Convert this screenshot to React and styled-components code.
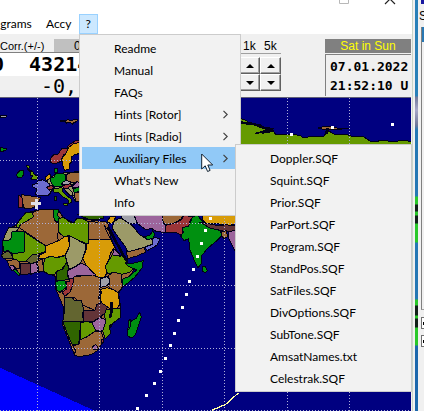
import React from "react";
import styled, { createGlobalStyle } from "styled-components";

const GlobalStyle = createGlobalStyle`
  *, *::before, *::after { box-sizing: border-box; }
  body { margin: 0; background: #f0f0f0; overflow: hidden; }
  button, input { font: inherit; color: inherit; }
`;

const uiFont = `Lato, "Open Sans", sans-serif`;
const labelFont = `"Liberation Sans", Arial, sans-serif`;
const monoFont = `"DejaVu Sans Mono", "Liberation Mono", monospace`;

const Desktop = styled.div`
  display: flex;
  height: 100vh;
  overflow: hidden;
  font-family: ${uiFont};
  font-size: 12px;
  color: #000;
`;

const AppWindow = styled.main`
  position: relative;
  flex: 1;
  min-width: 0;
  display: flex;
  flex-direction: column;
  background: #f0f0f0;
  border-right: 1px solid #c9d6c9;
`;

const TitleBar = styled.header`
  display: flex;
  justify-content: flex-end;
  align-items: flex-start;
  gap: 34px;
  height: 14px;
  padding-right: 16px;
  background: #fff;
`;

const CaptionButton = styled.button`
  display: flex;
  padding: 0;
  border: 0;
  background: none;
`;

const MenuBar = styled.nav`
  display: flex;
  align-items: stretch;
  height: 20px;
  background: #fff;
`;

const MenuBarItem = styled.button`
  padding: 0 6px;
  padding-left: ${(p) => (p.$cut ? "0" : "6px")};
  min-width: ${(p) => (p.$open ? "19px" : "39px")};
  border: 1px solid ${(p) => (p.$open ? "#99d1ff" : "transparent")};
  border-left-width: ${(p) => (p.$cut ? "0" : "1px")};
  background: ${(p) => (p.$open ? "#cce8ff" : "transparent")};
  line-height: 18px;
`;

const Instruments = styled.section`
  display: flex;
  justify-content: space-between;
  height: 63px;
  padding-top: 5px;
  font-family: ${labelFont};
`;

const Frequency = styled.div`
  flex: 1;
  display: grid;
  grid-template-rows: 14px 23px 21px;
`;

const CaptionRow = styled.div`
  display: flex;
  justify-content: space-between;
  width: 100px;
  border-bottom: 1px solid #808080;
  line-height: 14px;
`;

const Caption = styled.span`
  width: 54px;
  font-size: 11px;
  line-height: 14px;
`;

const Offset = styled.span`
  flex: 1;
  padding-left: 20px;
  background: #c0c0c0;
`;

const Reading = styled.output`
  width: 100px;
  padding-left: ${(p) => (p.$small ? "41px" : "0")};
  background: ${(p) => (p.$small ? "#f0f0f0" : "#fff")};
  font-family: ${monoFont};
  font-size: 20px;
  font-weight: ${(p) => (p.$small ? 400 : 700)};
  line-height: ${(p) => (p.$small ? "21px" : "23px")};
  white-space: pre;
`;

const Digits = styled.span`
  margin-left: ${(p) => (p.$first ? "-8px" : "25px")};
`;

const Steppers = styled.div`
  display: flex;
  width: 46px;
  margin-right: 40px;
`;

const Stepper = styled.fieldset`
  width: 21px;
  margin: 0;
  padding: 0;
  border: 0;
  display: flex;
  flex-direction: column;
  min-width: 0;
`;

const StepLabel = styled.span`
  height: 15px;
  margin-bottom: 3px;
  padding-left: 4px;
  border-bottom: 1px solid #a0a0a0;
  line-height: 14px;
`;

const StepButton = styled.button`
  display: grid;
  place-items: center;
  height: 17px;
  padding: 0;
  border: 1px solid;
  border-color: #fff #606060 #606060 #fff;
  box-shadow: inset -1px -1px #a0a0a0;
  background: #f0f0f0;
`;

const Clock = styled.div`
  width: 86px;
  margin-right: 1px;
`;

const ClockHeading = styled.h2`
  margin: 0;
  height: 14px;
  background: #808080;
  color: #ff0;
  font-size: 12px;
  font-weight: 400;
  line-height: 14px;
  text-align: center;
`;

const ClockFace = styled.div`
  height: 42px;
  margin-top: 1px;
  padding-left: 4px;
  border-top: 1px solid #808080;
  border-left: 1px solid #808080;
  font: 700 13px/19px ${monoFont};
  padding-top: 2px;
  white-space: nowrap;
`;

const TimeLine = styled.time`
  display: block;
`;

const MapArea = styled.section`
  flex: 1;
  min-height: 0;
  margin-right: 1px;
  background: #000080;
  border-top: 1px solid #606078;

  svg {
    display: block;
    width: 100%;
    height: 100%;
    shape-rendering: crispEdges;
  }
`;

const Popup = styled.ul`
  position: absolute;
  top: ${(p) => (p.$sub ? "144px" : "34px")};
  left: ${(p) => (p.$sub ? "235px" : "79px")};
  width: ${(p) => (p.$sub ? "177px" : "162px")};
  margin: 0;
  padding: 2px;
  border: 1px solid #ccc;
  background: #f2f2f2;
  list-style: none;
`;

const PopupItem = styled.button`
  display: flex;
  align-items: center;
  justify-content: space-between;
  width: 100%;
  height: 22px;
  padding: 0 10px 0 32px;
  border: 0;
  background: ${(p) => (p.$active ? "#91c9f7" : "transparent")};
  text-align: left;
  white-space: nowrap;
`;

const Cursor = styled.svg`
  position: absolute;
  left: 201px;
  top: 153px;
`;

const DesktopStrip = styled.div`
  width: 3px;
  margin-left: 2px;
  background: linear-gradient(
    #2880b8 0 96px, #707898 97px, #a8a8c8 110px, #707898 125px,
    #2478b4 130px 196px, #28c828 197px 204px, #102018 205px 211px,
    #28c828 212px 215px, #102018 216px 223px, #28c828 224px 242px,
    #2478b4 243px 299px, #28c828 300px 305px, #102018 306px 315px,
    #28c828 316px 318px, #102018 319px 327px, #28c828 328px 345px,
    #1c68ac 346px
  );
`;

const Neighbour = styled.aside`
  width: 6px;
  overflow: hidden;
  padding-left: 1px;
  background: #f0f0f0;
  font-family: ${labelFont};
`;

const NeighbourTitle = styled.div`
  height: 4px;
  margin: 0 0 5px 2px;
  background: #1818a0;
`;

const NeighbourMenu = styled.div`
  height: 18px;
  line-height: 14px;
`;

const NeighbourList = styled.div`
  height: 283px;
  margin: 0 0 7px 2px;
  border-left: 1px solid #808080;
  border-bottom: 1px solid #a0a0a0;
  background: linear-gradient(#2878b4 0 15px, #f0f0f0 15px);
`;

const Tick = styled.input`
  appearance: none;
  display: block;
  width: 12px;
  height: 12px;
  margin: 0 0 6px 2px;
  border: 1px solid #707070;
  background: linear-gradient(#000, #000) 1px 4px / 3px 3px no-repeat #fff;
`;

const green = "#009010";
const lime = "#659a00";
const brown = "#9c6838";
const gold = "#d89c08";
const sand = "#9c9a68";
const olive = "#636530";
const forest = "#306500";
const mauve = "#9c659c";
const maroon = "#633438";
const red = "#9c3538";
const violet = "#6c6cd0";
const grey = "#a0a0a8";

const regions = [
  {
    id: "europe",
    at: "translate(0 285)",
    lands: [
      [sand, "144,256 152,246 172,236 204,232 240,230 240,322 226,318 212,296 196,284 184,278 158,284 146,300 132,303 140,276"],
      [grey, "0,60 20,60 18,66 0,68"],
      [green, "0,158 18,160 18,166 0,171"],
      [brown, "180,76 196,78 204,73 213,78 226,72 234,75 230,80 220,83 218,88 208,81 200,85 196,80 182,80"],
      [red, "150,192 160,180 174,178 186,160 200,160 208,148 226,138 240,136 238,148 212,158 202,174 190,180 185,198 165,207 152,203"],
      [gold, "190,218 185,192 198,175 205,158 220,147 240,142 240,176 225,178 215,186 216,200 208,208 208,222 195,226"],
      [green, "162,222 172,220 172,232 165,234"],
      [lime, "80,210 90,214 86,222 98,230 102,238 115,244 112,252 92,252 98,243 90,240 92,232 82,222"],
      [green, "50,238 58,228 70,226 70,240 66,246 52,249"],
      [gold, "136,246 150,236 150,250 138,256"],
      [green, "152,248 162,246 166,236 176,234 196,238 199,262 185,266 188,273 160,273 153,262"],
      [brown, "200,238 215,232 240,232 240,262 212,264 200,254"],
      [violet, "98,268 112,266 114,258 128,254 140,260 150,268 146,278 152,294 144,300 128,303 106,298 110,282 98,276"],
      [red, "140,276 154,272 164,276 156,284 144,282"],
      [grey, "186,262 200,256 214,262 212,268 192,270"],
      [red, "188,272 210,266 214,272 202,280 190,279"],
      [gold, "212,268 228,266 232,274 216,277"],
      [mauve, "214,276 230,277 240,275 240,262 230,260"],
      [lime, "158,284 168,280 184,278 190,280 186,288 200,302 214,312 216,320 208,326 204,314 188,306 176,292 162,292"],
      [sand, "192,280 206,281 216,290 220,303 208,300 196,288"],
      [green, "218,280 240,278 240,290 222,292"],
      [brown, "222,294 240,292 240,320 228,318 224,306"],
      [forest, "164,304 170,304 169,316 163,316"],
      [lime, "190,324 205,325 202,332 192,330"],
      [brown, "64,299 82,301 100,304 122,308 118,318 108,326 102,338 84,342 70,338 68,316 60,312"],
      [red, "54,302 65,304 67,316 68,336 56,337 54,322"],
    ],
  },
  {
    id: "africa",
    at: "translate(0 585)",
    lands: [
      [brown, "50,90 76,54 112,46 176,46 190,68 222,84 240,70 320,82 334,132 346,160 364,186 388,208 408,214 376,266 356,294 362,340 330,400 300,450 250,480 222,476 188,390 192,340 168,284 166,244 128,230 60,240 8,184 8,138 28,100"],
      [lime, "48,92 58,76 70,62 76,54 98,53 102,66 84,76 62,88 55,100"],
      [brown, "100,66 98,53 112,46 135,42 160,42 164,62 166,78 176,86 173,130 176,136 144,152 134,150 58,98 62,88 84,76"],
      [green, "160,42 174,42 176,50 172,60 180,70 172,82 164,76 160,60"],
      [lime, "176,70 192,68 208,80 222,84 230,70 244,69 266,80 266,144 258,146 206,122 192,126 174,110"],
      [brown, "266,78 290,82 308,78 322,82 328,98 322,104 314,92 316,102 332,132 266,132"],
      [sand, "26,98 56,98 50,108 36,110 32,134 8,138 16,118"],
      [green, "36,110 50,108 74,110 72,172 38,176 24,166 10,170 8,138 32,134"],
      [lime, "74,112 136,152 136,170 112,178 98,180 86,190 80,200 58,200 48,194 36,190 38,176 72,172"],
      [olive, "8,176 24,168 34,176 38,190 10,190 4,182"],
      [brown, "20,196 50,194 60,204 58,220 48,222 42,212 28,214"],
      [mauve, "28,214 40,210 44,222 36,228"],
      [green, "40,226 48,222 60,238 56,242"],
      [maroon, "60,206 80,204 92,208 90,236 62,240"],
      [olive, "78,198 96,180 112,178 120,188 112,200 94,206"],
      [mauve, "92,206 110,202 114,230 92,238"],
      [brown, "112,198 128,192 130,228 116,230"],
      [gold, "138,152 178,136 196,124 206,124 208,154 196,180 174,186 150,186 136,192 116,190 118,180 136,172"],
      [lime, "136,190 150,184 174,188 196,182 200,202 186,222 172,228 162,240 146,238 130,228 130,206"],
      [sand, "208,122 258,148 256,166 248,190 242,204 224,216 202,224 202,204 196,182 208,154"],
      [gold, "266,132 332,132 344,156 332,174 326,196 316,214 322,234 312,246 290,246 272,230 256,206 248,190 258,166 258,146 266,144"],
      [forest, "168,240 172,228 188,222 200,202 206,216 202,236 206,254 184,256 168,256"],
      [mauve, "202,228 222,218 244,204 260,212 276,230 288,240 250,244 232,240 218,250 206,252"],
      [green, "166,260 182,256 196,258 200,276 190,284 180,292 170,284"],
      [red, "198,260 208,260 210,252 222,248 218,270 210,292 194,302 186,292 200,282"],
      [brown, "222,246 250,242 278,240 300,248 304,264 298,280 300,308 312,326 300,348 284,346 248,330 222,306 192,306 210,292 218,270"],
      [grey, "300,252 322,244 330,258 322,272 300,278"],
      [brown, "324,242 342,230 366,236 364,262 372,270 354,294 326,276 330,258"],
      [lime, "326,198 336,180 352,178 368,184 386,206 410,214 388,232 366,238 344,232 322,236 316,214"],
      [mauve, "342,162 350,168 362,184 338,180"],
      [gold, "300,284 322,278 340,284 356,294 358,330 350,342 318,338 302,318"],
    ],
  },
  {
    id: "south",
    at: "translate(0 870)",
    lands: [
      [olive, "192,22 218,24 224,32 244,32 252,60 248,70 250,95 188,95 194,62"],
      [maroon, "250,62 284,62 290,44 304,38 322,50 318,66 300,82 276,96 250,94"],
      [forest, "188,94 240,95 240,120 236,166 216,162 204,136"],
      [lime, "240,98 264,94 278,100 288,122 262,140 240,150"],
      [mauve, "276,98 300,82 318,90 312,118 300,124 286,120"],
      [lime, "318,60 360,54 360,84 328,108 332,130 316,146 308,122 318,92 312,78"],
      [brown, "218,166 236,164 240,150 262,140 284,124 304,124 312,152 292,182 274,194 238,200 224,196 226,180"],
      [mauve, "278,170 286,164 294,170 288,180 280,178"],
      [red, "304,148 312,148 310,158 304,156"],
      [green, "390,88 390,142 382,136 386,92"],
    ],
  },
  {
    id: "asia",
    at: "translate(330 600)",
    lands: [
      [forest, "-100,42 -20,42 -20,56 -60,60"],
      [gold, "0,50 16,48 14,64 2,72 -8,64"],
      [sand, "12,64 30,54 56,68 72,82 88,104 106,114 128,118 126,132 104,142 78,150 54,158 46,140 24,110 6,84"],
      [grey, "32,44 72,44 84,68 60,72 36,56"],
      [mauve, "72,44 158,44 158,64 166,76 166,98 138,94 126,86 106,88 92,78 80,66"],
      [brown, "158,44 218,46 212,58 192,70 166,74 158,62"],
      [red, "166,76 192,70 214,60 222,46 248,50 240,64 236,78 216,84 218,104 206,102 196,96 168,98"],
      [green, "236,78 248,50 262,46 276,62 296,78 332,90 334,108 318,124 292,146 276,166 274,190 264,204 254,184 240,150 236,116 222,122 212,108 220,96 216,84"],
      [gold, "276,44 380,44 380,70 352,78 320,70 290,70 276,60"],
      [maroon, "268,66 290,70 330,78 344,74 380,78 380,92 352,96 334,92 300,84"],
      [brown, "334,96 350,92 352,110 342,116 334,108"],
      [mauve, "354,94 380,92 380,160 366,136 354,112"],
      [brown, "48,156 76,150 102,142 108,156 80,168 54,176"],
      [violet, "104,142 126,134 130,112 150,116 140,136 112,152"],
      [green, "104,110 120,106 128,92 134,104 128,116 110,118"],
      [green, "46,188 62,192 100,182 96,204 74,232 38,262 36,238 56,230 80,210 54,198"],
      [green, "278,200 286,200 292,212 286,218 278,214"],
    ],
  },
  {
    id: "madagascar",
    at: "translate(360 900)",
    lands: [[green, "58,36 64,50 56,74 46,104 36,114 24,108 22,94 30,82 30,66 50,54"]],
  },
  {
    id: "arctic",
    at: "translate(660 0)",
    lands: [
      [lime, "62,356 80,362 90,372 120,374 134,384 156,386 166,402 200,402 240,406 250,414 280,408 312,408 324,392 342,402 380,404 398,410 430,410 452,424 500,422 520,426 548,420 580,426 580,445 56,445"],
      [brown, "294,384 320,378 350,384 390,386 344,388 310,388"],
      [lime, "106,400 140,390 160,386 150,396"],
    ],
  },
];

const meridians = [112, 298, 487, 673, 862, 1048];
const parallels = [482, 670, 856, 1045, 1231];

const track = [
  [631, 655], [616, 691], [604, 730], [592, 769], [580, 808], [568, 844],
  [559, 883], [547, 922], [535, 961], [523, 1000], [511, 1036], [496, 1075],
  [481, 1114], [463, 1150], [439, 1186], [412, 1225], [874, 403], [997, 382],
  [1177, 373],
];

function WorldMap() {
  return (
    <svg viewBox="0 294 1233 939" preserveAspectRatio="xMinYMin slice" role="img" aria-label="World map">
      <polygon points="0,1103 286,1233 0,1233" fill="#0000ff" />
      {regions.map((r) => (
        <g key={r.id} transform={r.at} stroke="#000018" strokeWidth="3" strokeLinejoin="round">
          {r.lands.map(([fill, points]) => (
            <polygon key={points} fill={fill} points={points} />
          ))}
        </g>
      ))}
      <g fill="none" stroke="#000018" strokeWidth="8" strokeLinejoin="round">
        <path d="M324 680l12 22 20 38 10 20 16 24" />
        <path d="M334 905v30l-4 18M302 874l-4 22" />
        <path d="M722 368l40 4 30 12 26 4M784 398l36-8M984 384l-6 18" />
      </g>
      <g stroke="#b0b0d8" strokeWidth="3" strokeDasharray="3 6">
        {meridians.map((x) => <line key={x} x1={x} x2={x} y1="294" y2="1233" />)}
        {parallels.map((y) => <line key={y} x1="0" x2="1233" y1={y} y2={y} />)}
      </g>
      <path d="M635 1231l42-18 38-34" fill="none" stroke="#ffffa0" strokeWidth="4" />
      <path d="M104 597h9v10h11v9h-11v11h-9v-11h-11v-9h11z" fill="#e0e0e8" />
      {track.map(([x, y]) => (
        <rect key={`${x}-${y}`} x={x - 4} y={y - 4} width="9" height="9" fill="#fff" />
      ))}
    </svg>
  );
}

function Chevron() {
  return (
    <svg width="5" height="9" viewBox="0 0 5 9" fill="none" stroke="#404040" strokeWidth="1.2" aria-hidden="true">
      <path d="M.5 .8L4.2 4.5.5 8.2" />
    </svg>
  );
}

function Arrow({ down }) {
  return (
    <svg width="8" height="4" viewBox="0 0 8 4" aria-hidden="true">
      <path d={down ? "M0 0h8L4 4z" : "M0 4h8L4 0z"} />
    </svg>
  );
}

function StepperControl({ label }) {
  return (
    <Stepper aria-label={label}>
      <StepLabel>{label}</StepLabel>
      <StepButton aria-label={`${label} up`}><Arrow /></StepButton>
      <StepButton aria-label={`${label} down`}><Arrow down /></StepButton>
    </Stepper>
  );
}

const helpMenu = [
  { label: "Readme" },
  { label: "Manual" },
  { label: "FAQs" },
  { label: "Hints [Rotor]", more: true },
  { label: "Hints [Radio]", more: true },
  { label: "Auxiliary Files", more: true, active: true },
  { label: "What's New" },
  { label: "Info" },
];

const auxiliaryFiles = [
  "Doppler.SQF", "Squint.SQF", "Prior.SQF", "ParPort.SQF", "Program.SQF", "StandPos.SQF",
  "SatFiles.SQF", "DivOptions.SQF", "SubTone.SQF", "AmsatNames.txt", "Celestrak.SQF",
].map((label) => ({ label }));

function PopupMenu({ items, sub }) {
  return (
    <Popup $sub={sub} role="menu">
      {items.map((item) => (
        <li key={item.label} role="none">
          <PopupItem role="menuitem" $active={item.active}>
            {item.label}
            {item.more && <Chevron />}
          </PopupItem>
        </li>
      ))}
    </Popup>
  );
}

export default function App() {
  return (
    <Desktop>
      <GlobalStyle />
      <AppWindow>
        <TitleBar>
          <CaptionButton aria-label="Maximize">
            <svg width="11" height="5" viewBox="0 0 11 5" fill="none" stroke="#b8b8b8">
              <path d="M.5 0v3.5h9V0" />
            </svg>
          </CaptionButton>
          <CaptionButton aria-label="Close">
            <svg width="12" height="5" viewBox="0 0 12 5" fill="none" stroke="#222" strokeWidth="1.2">
              <path d="M1 4l5-5 5 5" />
            </svg>
          </CaptionButton>
        </TitleBar>
        <MenuBar>
          <MenuBarItem $cut>grams</MenuBarItem>
          <MenuBarItem>Accy</MenuBarItem>
          <MenuBarItem $open>?</MenuBarItem>
        </MenuBar>
        <Instruments>
          <Frequency>
            <CaptionRow>
              <Caption>Corr.(+/-)</Caption>
              <Offset>0</Offset>
            </CaptionRow>
            <Reading>
              <Digits $first>0</Digits>
              <Digits>43214</Digits>
            </Reading>
            <Reading $small>-0,</Reading>
          </Frequency>
          <Steppers>
            <StepperControl label="1k" />
            <StepperControl label="5k" />
          </Steppers>
          <Clock>
            <ClockHeading>Sat in Sun</ClockHeading>
            <ClockFace>
              <TimeLine>07.01.2022</TimeLine>
              <TimeLine>21:52:10 U</TimeLine>
            </ClockFace>
          </Clock>
        </Instruments>
        <MapArea>
          <WorldMap />
        </MapArea>
        <PopupMenu items={helpMenu} />
        <PopupMenu items={auxiliaryFiles} sub />
        <Cursor width="13" height="20" viewBox="0 0 13 20" aria-hidden="true">
          <path d="M.7 1v15l3.5-3.2L6.600 18.500l2.500-1.100L6.800 12h4.900z" fill="#fff" stroke="#102030" />
        </Cursor>
      </AppWindow>
      <DesktopStrip />
      <Neighbour>
        <NeighbourTitle />
        <NeighbourMenu>S</NeighbourMenu>
        <NeighbourList />
        <Tick type="checkbox" aria-label="First option" defaultChecked />
        <Tick type="checkbox" aria-label="Second option" defaultChecked />
      </Neighbour>
    </Desktop>
  );
}
